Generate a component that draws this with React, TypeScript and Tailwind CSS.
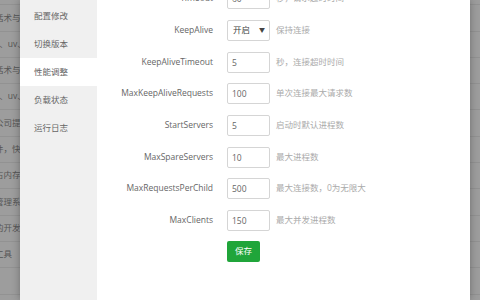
import { useState } from 'react'

type Row = {
  label: string
  value: string
  note: string
  select?: boolean
}

const rows: Row[] = [
  { label: 'Timeout', value: '60', note: '秒，请求超时时间' },
  { label: 'KeepAlive', value: '开启', note: '保持连接', select: true },
  { label: 'KeepAliveTimeout', value: '5', note: '秒，连接超时时间' },
  { label: 'MaxKeepAliveRequests', value: '100', note: '单次连接最大请求数' },
  { label: 'StartServers', value: '5', note: '启动时默认进程数' },
  { label: 'MaxSpareServers', value: '10', note: '最大进程数' },
  { label: 'MaxRequestsPerChild', value: '500', note: '最大连接数，0为无限大' },
  { label: 'MaxClients', value: '150', note: '最大并发进程数' },
]

const menu = ['配置修改', '切换版本', '性能调整', '负载状态', '运行日志']

const backdropRows = [
  '话术与',
  '话术与',
  '，、uv、',
  '话术与',
  '，、uv、',
  '公司提',
  '件，快',
  '占内存',
  '管理系',
  '的开发',
  '工具',
  '',
]

export default function App() {
  const [active, setActive] = useState('性能调整')

  return (
    <div
      className="relative h-[300px] w-[480px] overflow-hidden bg-[#9d9d9d] text-[8.5px]"
      style={{ fontFamily: '"Open Sans", "Noto Sans CJK SC", sans-serif' }}
    >
      {/* dimmed page behind the dialog */}
      <div className="-mt-[21px] flex flex-col">
        {backdropRows.map((text, i) => (
          <div
            key={i}
            className="flex h-[26.3px] items-center border-b border-[#929292] pl-[1px] text-[#555]"
          >
            <span className="-ml-[6px] whitespace-nowrap">{text}</span>
          </div>
        ))}
      </div>

      <div className="absolute left-[20px] top-0 flex h-full w-[450px] bg-white shadow-[0_0_8px_rgba(0,0,0,0.3)]">
        <div className="flex w-[77px] flex-col bg-[#f0f0f0] pt-[2px]">
          {menu.map((item) => (
            <button
              key={item}
              onClick={() => setActive(item)}
              className={`flex h-[28px] items-center pl-[14px] text-left text-[#666] ${
                active === item ? 'bg-white' : ''
              }`}
            >
              {item}
            </button>
          ))}
        </div>

        <div className="-mt-[17px] flex flex-col">
          {rows.map((row) => (
            <div key={row.label} className="flex h-[31.67px] items-center">
              <span className="w-[116px] text-right text-[#666]">{row.label}</span>
              {row.select ? (
                <div className="ml-[14px] flex h-[21px] w-[43px] items-center justify-between rounded-[2px] border border-[#d5d5d5] pl-[5px] pr-[4px] text-[#444]">
                  <span>{row.value}</span>
                  <span className="text-[6px]">▼</span>
                </div>
              ) : (
                <input
                  defaultValue={row.value}
                  className="ml-[14px] h-[21px] w-[43px] rounded-[2px] border border-[#d5d5d5] px-[4px] text-[#666] outline-none"
                />
              )}
              <span className="ml-[6px] whitespace-nowrap text-[#aaa]">{row.note}</span>
            </div>
          ))}
          <div className="ml-[130px] mt-[5px]">
            <button className="h-[21px] w-[33px] rounded-[2px] bg-[#20a53a] text-white">保存</button>
          </div>
        </div>
      </div>
    </div>
  )
}
